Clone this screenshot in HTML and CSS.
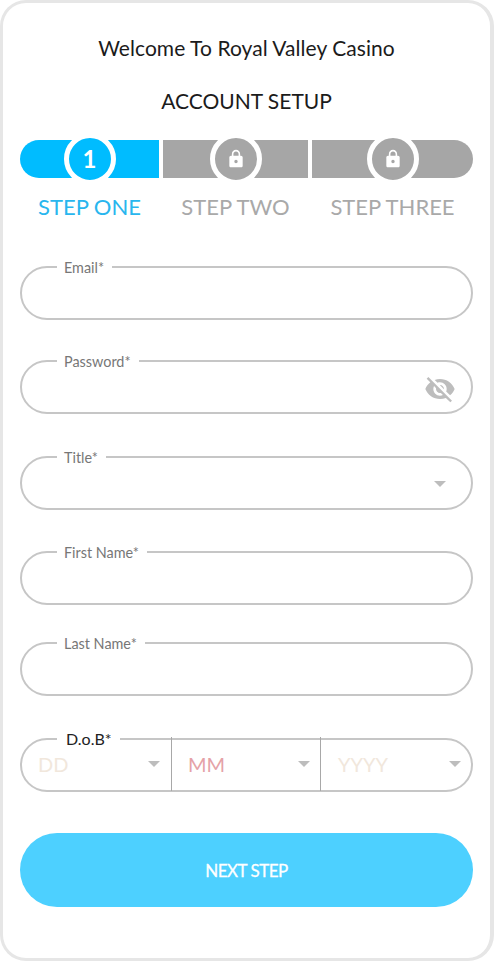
FILE: index.html
```html
<!DOCTYPE html>
<html lang="en">
<head>
<meta charset="utf-8">
<title>Account Setup</title>
<link rel="stylesheet" href="styles.css">
</head>
<body>
<main class="card">
  <h1 class="welcome">Welcome To Royal Valley Casino</h1>
  <h2 class="setup">ACCOUNT SETUP</h2>

  <div class="stepper">
    <div class="seg seg-one active"><span class="badge">1</span></div>
    <div class="seg seg-two"><span class="badge"><svg class="lock" viewBox="0 0 24 24"><path d="M18 8h-1V6c0-2.76-2.24-5-5-5S7 3.24 7 6v2H6c-1.1 0-2 .9-2 2v10c0 1.1.9 2 2 2h12c1.1 0 2-.9 2-2V10c0-1.1-.9-2-2-2zm-6 9c-1.1 0-2-.9-2-2s.9-2 2-2 2 .9 2 2-.9 2-2 2zm3.1-9H8.9V6c0-1.71 1.39-3.1 3.1-3.1 1.71 0 3.1 1.39 3.1 3.1v2z"/></svg></span></div>
    <div class="seg seg-three"><span class="badge"><svg class="lock" viewBox="0 0 24 24"><path d="M18 8h-1V6c0-2.76-2.24-5-5-5S7 3.24 7 6v2H6c-1.1 0-2 .9-2 2v10c0 1.1.9 2 2 2h12c1.1 0 2-.9 2-2V10c0-1.1-.9-2-2-2zm-6 9c-1.1 0-2-.9-2-2s.9-2 2-2 2 .9 2 2-.9 2-2 2zm3.1-9H8.9V6c0-1.71 1.39-3.1 3.1-3.1 1.71 0 3.1 1.39 3.1 3.1v2z"/></svg></span></div>
  </div>
  <div class="step-labels">
    <span class="seg-one label-active">STEP ONE</span>
    <span class="seg-two">STEP TWO</span>
    <span class="seg-three">STEP THREE</span>
  </div>

  <form class="form">
    <fieldset class="field f-email"><legend>Email*</legend></fieldset>
    <fieldset class="field f-password"><legend>Password*</legend>
      <svg class="eye" viewBox="0 0 24 24"><path d="M12 7c2.76 0 5 2.24 5 5 0 .65-.13 1.26-.36 1.83l2.92 2.92c1.51-1.26 2.7-2.89 3.43-4.75-1.73-4.39-6-7.5-11-7.5-1.4 0-2.74.25-3.98.7l2.16 2.16C10.74 7.13 11.35 7 12 7zM2 4.27l2.28 2.28.46.46C3.08 8.3 1.78 10.02 1 12c1.73 4.39 6 7.5 11 7.5 1.55 0 3.03-.3 4.38-.84l.42.42L19.73 22 21 20.73 3.27 3 2 4.27zM7.53 9.8l1.55 1.55c-.05.21-.08.43-.08.65 0 1.66 1.34 3 3 3 .22 0 .44-.03.65-.08l1.55 1.55c-.67.33-1.41.53-2.2.53-2.76 0-5-2.24-5-5 0-.79.2-1.53.53-2.2zm4.31-.78l3.15 3.15.02-.16c0-1.66-1.34-3-3-3l-.17.01z"/></svg>
    </fieldset>
    <fieldset class="field f-title"><legend>Title*</legend><i class="arrow"></i></fieldset>
    <fieldset class="field f-first"><legend>First Name*</legend></fieldset>
    <fieldset class="field f-last"><legend>Last Name*</legend></fieldset>
    <fieldset class="field f-dob"><legend>D.o.B*</legend>
      <div class="dob-part dob-dd"><span class="pale">DD</span><i class="arrow"></i></div>
      <div class="dob-part dob-mm"><span class="rose">MM</span><i class="arrow"></i></div>
      <div class="dob-part dob-yy"><span class="pale">YYYY</span><i class="arrow"></i></div>
    </fieldset>
    <button class="next" type="button">NEXT STEP</button>
  </form>
</main>
</body>
</html>
```
FILE: styles.css
```css
* { box-sizing: border-box; }
html, body { margin: 0; padding: 0; background: #fff; }
body { width: 494px; height: 961px; overflow: hidden; font-family: Lato, "Open Sans", sans-serif; }

.card {
  width: 494px;
  height: 961px;
  padding: 33px 17px 0;
  border: 3px solid #e6e6e6;
  border-right-width: 4px;
  border-radius: 26px;
  background: #fff;
  display: flex;
  flex-direction: column;
}
.welcome, .setup {
  margin: 0;
  font-weight: 400;
  font-size: 21px;
  line-height: 24px;
  color: #1b1b1b;
  text-align: center;
}
.welcome { letter-spacing: 0.05px; }
.setup { margin-top: 29px; }

.stepper { display: flex; gap: 4px; margin-top: 27px; height: 38px; width: 453px; }
.seg-one { width: 139px; }
.seg-two { width: 145px; }
.seg-three { width: 161px; }
.seg {
  display: flex;
  align-items: center;
  justify-content: center;
  background: #a6a6a6;
}
.seg.active { background: #00bcff; border-radius: 19px 0 0 19px; }
.seg-three.seg { border-radius: 0 19px 19px 0; }
.badge {
  flex: none;
  width: 52px;
  height: 52px;
  border: 5px solid #fff;
  border-radius: 50%;
  color: #fff;
  font-size: 24px;
  font-weight: 700;
  line-height: 40px;
  display: flex;
  align-items: center;
  justify-content: center;
}
.seg.active .badge { background: #00bcff; }
.seg-two .badge, .seg-three .badge { background: #a6a6a6; }
.lock { width: 20px; height: 20px; fill: #fff; }

.step-labels { display: flex; gap: 4px; margin-top: 16px; width: 453px; font-size: 22px; line-height: 26px; color: #a9a9a9; }
.step-labels span { text-align: center; white-space: nowrap; }
.label-active { color: #29b6ee; }

.form { display: flex; flex-direction: column; }
.field {
  position: relative;
  margin: 0;
  padding: 0;
  width: 453px;
  height: 62px;
  border: 2px solid #c6c6c6;
  border-radius: 27px;
  min-width: 0;
}
.field legend {
  margin-left: 35px;
  padding: 0 8px 0 7px;
  font-size: 14.4px;
  line-height: 20px;
  height: 18px;
  color: #777;
}
.f-email { margin-top: 38px; }
.f-password { margin-top: 32px; }
.f-title { margin-top: 34px; }
.f-first { margin-top: 33px; }
.f-last { margin-top: 29px; }
.f-dob { margin-top: 34px; display: flex; }
.f-dob legend { font-size: 16px; line-height: 18px; color: #222; padding: 0 8px 0 9px; }

.eye { position: absolute; right: 15px; top: 3px; width: 32px; height: 32px; fill: #bdbdbd; }
.arrow {
  display: block;
  width: 0;
  height: 0;
  border-left: 6px solid transparent;
  border-right: 6px solid transparent;
  border-top: 6px solid #bdbdbd;
}
.f-title > .arrow { position: absolute; right: 25px; top: 15px; }

.dob-part {
  position: relative;
  height: 54px;
  margin-top: -11px;
  display: flex;
  align-items: center;
  justify-content: space-between;
  font-size: 20px;
}
.dob-dd { width: 149px; padding: 0 11px 0 16px; }
.dob-mm, .dob-yy { border-left: 1.5px solid #a8a8a8; }
.dob-mm { width: 149px; padding: 0 10px 0 16px; }
.dob-yy { width: 151px; padding: 0 10px 0 17px; }
.pale { color: #f1e7dc; }
.rose { color: #e5a2a7; }

.next {
  margin-top: 41px;
  width: 453px;
  height: 74px;
  border: 0;
  border-radius: 37px;
  background: #4dd0ff;
  color: #fff;
  font-family: inherit;
  font-size: 17px;
  font-weight: 400;
  letter-spacing: -0.5px;
  -webkit-text-stroke: 0.3px #fff;
}
```
